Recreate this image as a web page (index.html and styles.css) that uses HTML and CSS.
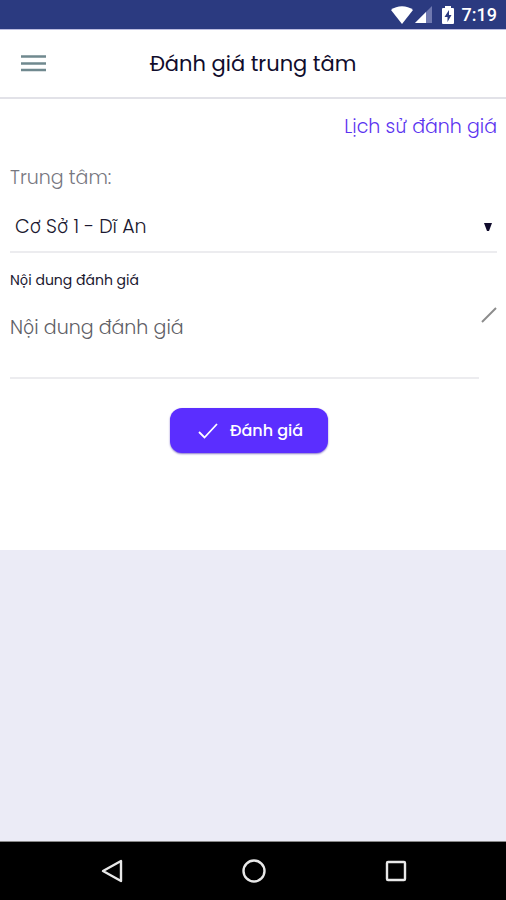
FILE: index.html
```html
<!DOCTYPE html>
<html lang="vi">
<head>
<meta charset="utf-8">
<meta name="viewport" content="width=device-width, initial-scale=1">
<title>Đánh giá trung tâm</title>
<link rel="stylesheet" href="styles.css">
</head>
<body>
<div class="statusbar">
  <svg class="wifi" width="22" height="18" viewBox="0 0 22 18" aria-hidden="true"><path d="M0 4C6-1 16-1 22 4L11 18Z" fill="#fff"/></svg>
  <svg class="signal" width="17" height="17" viewBox="0 0 17 17" aria-hidden="true"><path d="M17 0V17H0Z" fill="#7079b0"/><path d="M11 6V17H0Z" fill="#fff"/></svg>
  <svg class="battery" width="12" height="18" viewBox="0 0 12 18" aria-hidden="true"><path d="M3 2V0H9V2H11Q12 2 12 3V17Q12 18 11 18H1Q0 18 0 17V3Q0 2 1 2Z" fill="#fff"/><path d="M7 4L2.500 11H5.500V16L9.500 9H7Z" fill="#2b3a80"/></svg>
  <time>7:19</time>
</div>
<header class="appbar">
  <button class="menu" type="button" aria-label="Menu">
    <svg width="25" height="17" viewBox="0 0 25 17" aria-hidden="true"><path d="M0 1.500H25M0 8.500H25M0 15H25" stroke="#70898f" stroke-width="2.600"/></svg>
  </button>
  <h1>Đánh giá trung tâm</h1>
</header>
<main>
  <form class="review">
    <a class="history" href="#">Lịch sử đánh giá</a>
    <label class="center-label" for="center">Trung tâm:</label>
    <div class="select-row">
      <select id="center"><option>Cơ Sở 1 - Dĩ An</option></select>
      <svg width="8" height="8" viewBox="0 0 8 8" aria-hidden="true"><path d="M0 0H8L5 8H3Z" fill="#100c2c"/></svg>
    </div>
    <label class="content-label" for="content">Nội dung đánh giá</label>
    <div class="content-row">
      <textarea id="content" placeholder="Nội dung đánh giá"></textarea>
      <svg width="16" height="16" viewBox="0 0 16 16" aria-hidden="true"><path d="M1 15L15 1" stroke="#8c8c8c" stroke-width="2"/></svg>
    </div>
    <button class="submit" type="button">
      <svg width="20" height="16" viewBox="0 0 20 16" aria-hidden="true"><path d="M1 9L6.500 14.500L19 1" fill="none" stroke="#fff" stroke-width="1.800"/></svg>
      Đánh giá
    </button>
  </form>
</main>
<nav class="navbar">
  <button type="button" aria-label="Back"><svg width="24" height="24" viewBox="0 0 24 24" aria-hidden="true"><path d="M21 2V22L3 12Z"/></svg></button>
  <button type="button" aria-label="Home"><svg width="24" height="24" viewBox="0 0 24 24" aria-hidden="true"><circle cx="12" cy="12" r="10.500"/></svg></button>
  <button type="button" aria-label="Recent"><svg width="24" height="24" viewBox="0 0 24 24" aria-hidden="true"><rect x="3" y="3" width="18" height="18" rx="1"/></svg></button>
</nav>
</body>
</html>
```
FILE: styles.css
```css
* { box-sizing: border-box; }

body {
  margin: 0;
  min-height: 100vh;
  display: flex;
  flex-direction: column;
  font-family: Poppins, Inter, "Noto Sans", sans-serif;
  font-size: 19px;
  font-weight: 300;
  line-height: 24px;
  color: #1b1830;
  background: #ebebf6;
}

button, select, textarea {
  margin: 0;
  padding: 0;
  border: 0;
  background: none;
  font: inherit;
  color: inherit;
}

svg { display: block; flex: none; }

.statusbar {
  height: 30px;
  padding: 0 9px;
  display: flex;
  align-items: center;
  justify-content: flex-end;
  background: #2b3a80;
  border-bottom: 1px solid #bcbce0;
  color: #fff;
  font: 500 18px/24px Roboto, sans-serif;
}

.signal { margin-left: 2px; }
.battery { margin: 0 8px 0 10px; }

.appbar {
  height: 69px;
  padding: 0 21px;
  display: grid;
  grid-template-columns: 25px 1fr 25px;
  align-items: center;
  background: #fff;
  border-bottom: 2px solid #e2e2e8;
}

h1 {
  margin: 0;
  font-size: 21px;
  line-height: 32px;
  font-weight: 400;
  text-align: center;
  color: #100c2c;
}

main { flex: 1; }

.review {
  padding: 16px 9px 97px 10px;
  display: flex;
  flex-direction: column;
  background: #fff;
}

.history {
  align-self: flex-end;
  color: #5b33f0;
  text-decoration: none;
}

.center-label {
  margin-top: 27px;
  color: #77777f;
}

.select-row {
  margin-top: 12px;
  padding: 0 5px;
  height: 51px;
  display: flex;
  align-items: center;
  border-bottom: 2px solid #ececef;
}

.select-row select {
  flex: 1;
  height: 32px;
  appearance: none;
}

.content-label {
  margin-top: 15px;
  font-size: 14px;
  line-height: 24px;
  font-weight: 400;
}

.content-row {
  display: flex;
  align-items: flex-start;
  margin-top: 7px;
}

.content-row textarea {
  flex: 1;
  height: 80px;
  padding-top: 17px;
  resize: none;
  border-bottom: 2px solid #ececef;
}

.content-row textarea::placeholder { color: #606066; opacity: 1; }
.content-row svg { margin: 8px 0 0 2px; }

.submit {
  align-self: center;
  width: 158px;
  height: 45px;
  margin-top: 29px;
  margin-right: 10px;
  padding-left: 4px;
  display: flex;
  align-items: center;
  justify-content: center;
  gap: 12px;
  border-radius: 12px;
  background: #5b2eff;
  box-shadow: 0 1px 2px #8878ca;
  color: #fff;
  font-size: 16px;
  font-weight: 500;
}

.navbar {
  height: 59px;
  padding: 0 39px 0 41px;
  display: grid;
  grid-template-columns: repeat(3, 1fr);
  background: #000;
  border-top: 1px solid #888;
}

.navbar button { display: grid; place-items: center; }
.navbar svg { fill: none; stroke: #e8e8e8; stroke-width: 2.4; stroke-linejoin: round; }
```
